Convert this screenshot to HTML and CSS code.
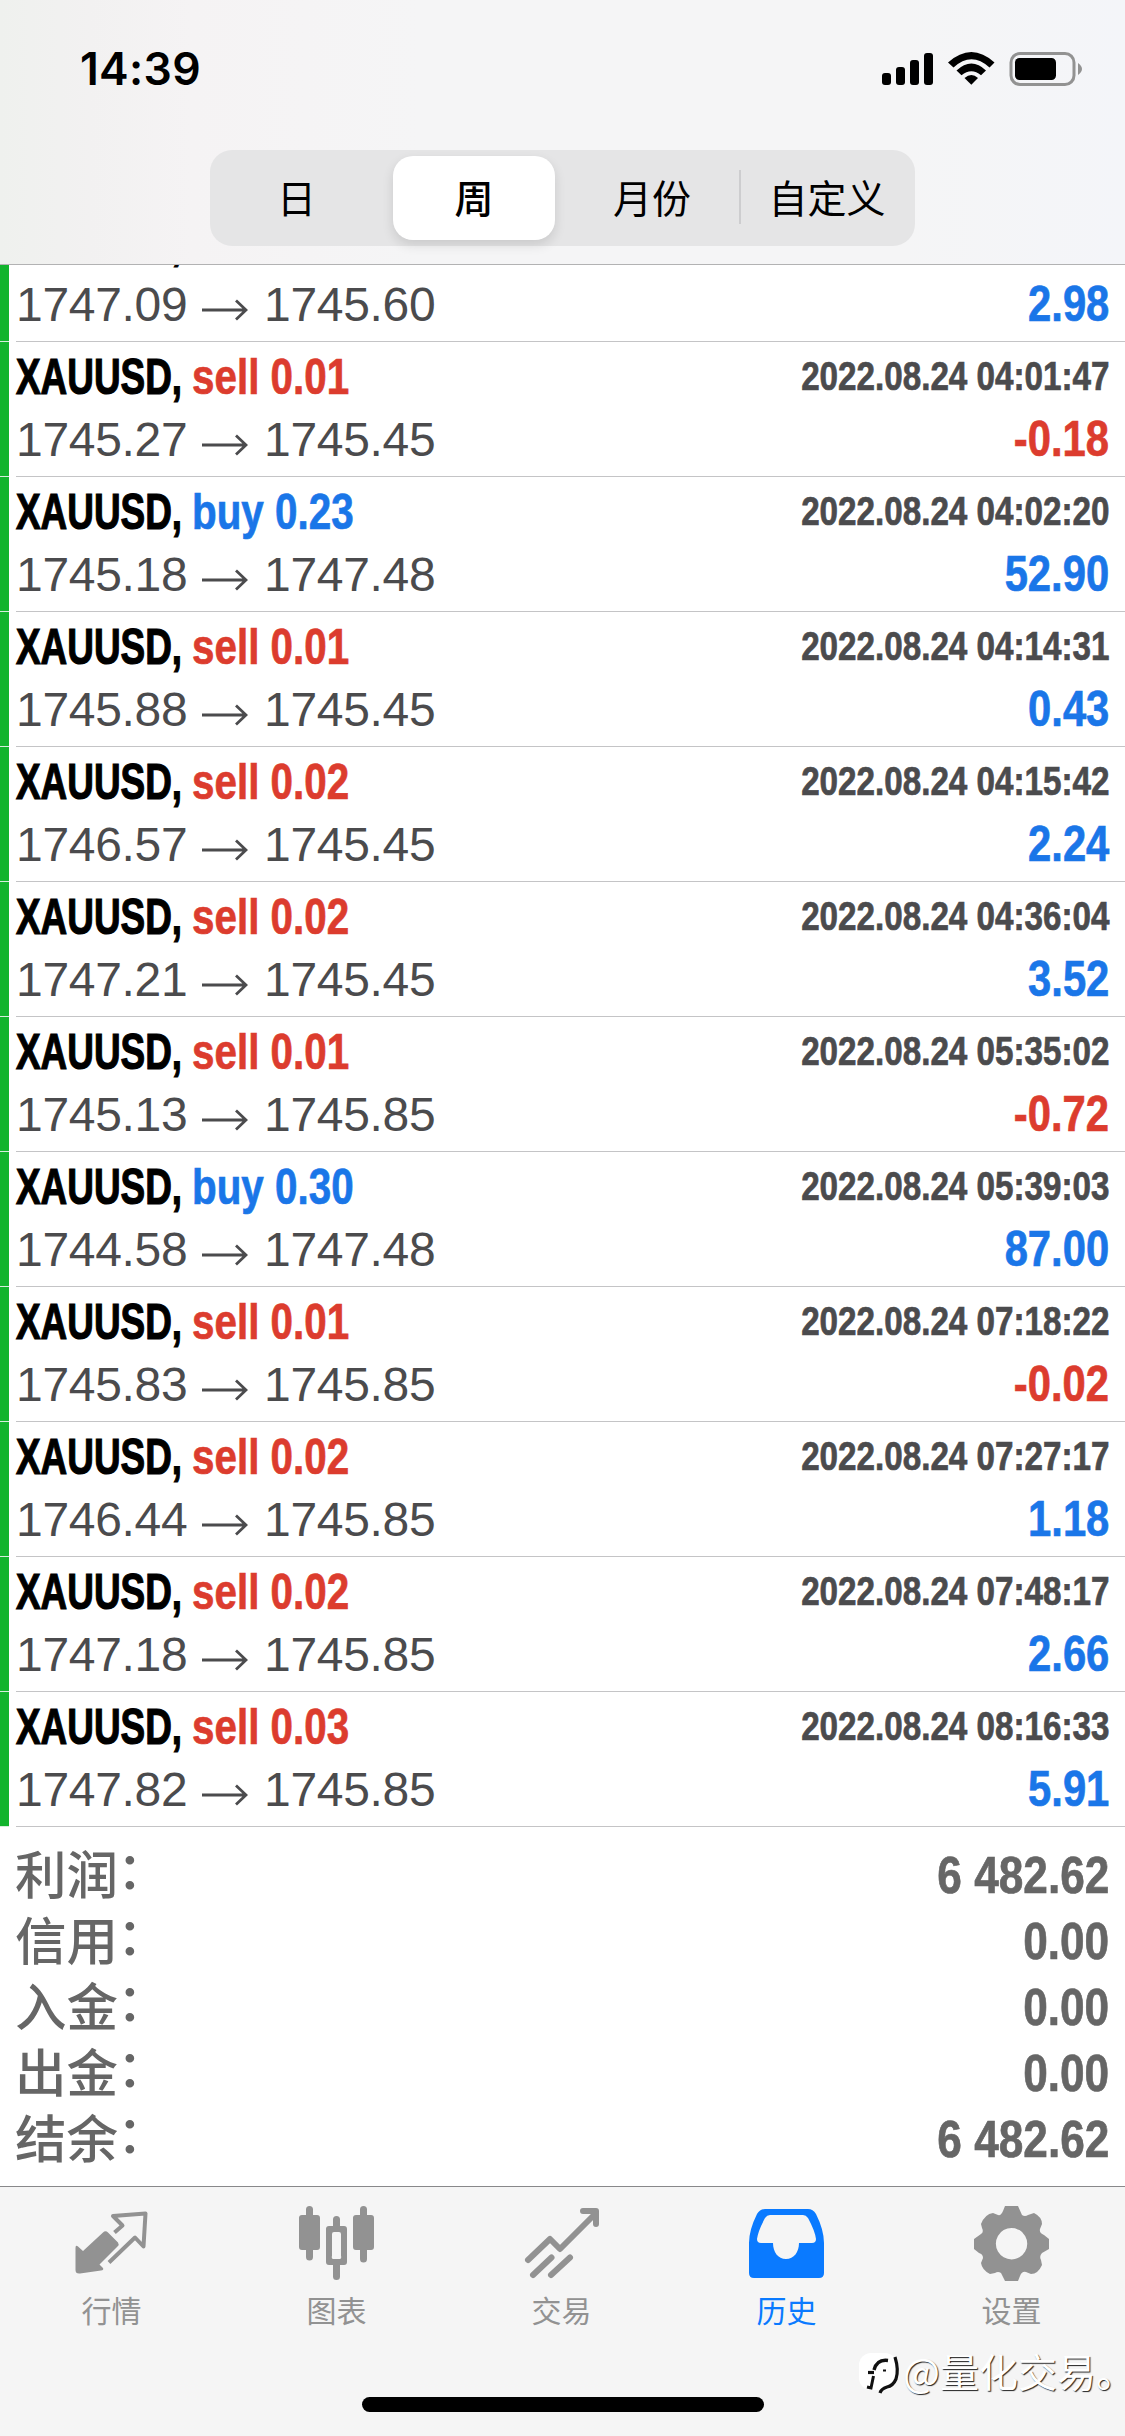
FILE: index.html
```html
<!DOCTYPE html>
<html lang="zh-CN">
<head>
<meta charset="utf-8">
<title>历史</title>
<link rel="stylesheet" href="styles.css">
</head>
<body>
<div class="screen">
<header class="top">
  <div class="status">
    <span class="clock">14:39</span>
    <svg class="status-icons" width="202" height="36" viewBox="0 0 202 36">
      <rect x="0" y="21" width="9" height="12" rx="3"/><rect x="14" y="15" width="9" height="18" rx="3"/><rect x="28" y="8" width="9" height="25" rx="3"/><rect x="42" y="1" width="9" height="32" rx="3"/>
      <path d="M66 10.5Q89.5 -10.5 112.500 10.5L107.500 15.500Q89.500 -1 71.500 15.500Z"/>
      <path d="M74.500 18.500Q89.500 4.500 104 18.500L99 23.300Q89.500 15 79.500 23.300Z"/>
      <path d="M82.500 26Q89.500 20 96 26L89.300 32.800Z"/>
      <rect x="129" y="1.500" width="63" height="31" rx="9" fill="none" stroke="#929292" stroke-width="3"/>
      <rect x="133" y="6" width="41" height="22" rx="4.500"/>
      <path d="M196 11Q204 17 196 23Z" fill="#929292"/>
    </svg>
  </div>
  <div class="segments">
    <span class="seg">日</span><span class="seg on">周</span><span class="seg">月份</span><span class="seg div">自定义</span>
  </div>
</header>
<main class="list">
  <div class="row"><div class="line"><b class="sym">XAUUSD,</b><b class="side sell">sell 0.02</b><b class="date">2022.08.24 03:58:11</b></div><div class="line low"><span class="price">1747.09</span><svg class="arrow" viewBox="0 0 46 22"><path d="M0 11H44M34 1.500L44 11L34 20.500"/></svg><span class="price">1745.60</span><b class="sum gain">2.98</b></div></div>
  <div class="row"><div class="line"><b class="sym">XAUUSD,</b><b class="side sell">sell 0.01</b><b class="date">2022.08.24 04:01:47</b></div><div class="line low"><span class="price">1745.27</span><svg class="arrow" viewBox="0 0 46 22"><path d="M0 11H44M34 1.500L44 11L34 20.500"/></svg><span class="price">1745.45</span><b class="sum loss">-0.18</b></div></div>
  <div class="row"><div class="line"><b class="sym">XAUUSD,</b><b class="side buy">buy 0.23</b><b class="date">2022.08.24 04:02:20</b></div><div class="line low"><span class="price">1745.18</span><svg class="arrow" viewBox="0 0 46 22"><path d="M0 11H44M34 1.500L44 11L34 20.500"/></svg><span class="price">1747.48</span><b class="sum gain">52.90</b></div></div>
  <div class="row"><div class="line"><b class="sym">XAUUSD,</b><b class="side sell">sell 0.01</b><b class="date">2022.08.24 04:14:31</b></div><div class="line low"><span class="price">1745.88</span><svg class="arrow" viewBox="0 0 46 22"><path d="M0 11H44M34 1.500L44 11L34 20.500"/></svg><span class="price">1745.45</span><b class="sum gain">0.43</b></div></div>
  <div class="row"><div class="line"><b class="sym">XAUUSD,</b><b class="side sell">sell 0.02</b><b class="date">2022.08.24 04:15:42</b></div><div class="line low"><span class="price">1746.57</span><svg class="arrow" viewBox="0 0 46 22"><path d="M0 11H44M34 1.500L44 11L34 20.500"/></svg><span class="price">1745.45</span><b class="sum gain">2.24</b></div></div>
  <div class="row"><div class="line"><b class="sym">XAUUSD,</b><b class="side sell">sell 0.02</b><b class="date">2022.08.24 04:36:04</b></div><div class="line low"><span class="price">1747.21</span><svg class="arrow" viewBox="0 0 46 22"><path d="M0 11H44M34 1.500L44 11L34 20.500"/></svg><span class="price">1745.45</span><b class="sum gain">3.52</b></div></div>
  <div class="row"><div class="line"><b class="sym">XAUUSD,</b><b class="side sell">sell 0.01</b><b class="date">2022.08.24 05:35:02</b></div><div class="line low"><span class="price">1745.13</span><svg class="arrow" viewBox="0 0 46 22"><path d="M0 11H44M34 1.500L44 11L34 20.500"/></svg><span class="price">1745.85</span><b class="sum loss">-0.72</b></div></div>
  <div class="row"><div class="line"><b class="sym">XAUUSD,</b><b class="side buy">buy 0.30</b><b class="date">2022.08.24 05:39:03</b></div><div class="line low"><span class="price">1744.58</span><svg class="arrow" viewBox="0 0 46 22"><path d="M0 11H44M34 1.500L44 11L34 20.500"/></svg><span class="price">1747.48</span><b class="sum gain">87.00</b></div></div>
  <div class="row"><div class="line"><b class="sym">XAUUSD,</b><b class="side sell">sell 0.01</b><b class="date">2022.08.24 07:18:22</b></div><div class="line low"><span class="price">1745.83</span><svg class="arrow" viewBox="0 0 46 22"><path d="M0 11H44M34 1.500L44 11L34 20.500"/></svg><span class="price">1745.85</span><b class="sum loss">-0.02</b></div></div>
  <div class="row"><div class="line"><b class="sym">XAUUSD,</b><b class="side sell">sell 0.02</b><b class="date">2022.08.24 07:27:17</b></div><div class="line low"><span class="price">1746.44</span><svg class="arrow" viewBox="0 0 46 22"><path d="M0 11H44M34 1.500L44 11L34 20.500"/></svg><span class="price">1745.85</span><b class="sum gain">1.18</b></div></div>
  <div class="row"><div class="line"><b class="sym">XAUUSD,</b><b class="side sell">sell 0.02</b><b class="date">2022.08.24 07:48:17</b></div><div class="line low"><span class="price">1747.18</span><svg class="arrow" viewBox="0 0 46 22"><path d="M0 11H44M34 1.500L44 11L34 20.500"/></svg><span class="price">1745.85</span><b class="sum gain">2.66</b></div></div>
  <div class="row"><div class="line"><b class="sym">XAUUSD,</b><b class="side sell">sell 0.03</b><b class="date">2022.08.24 08:16:33</b></div><div class="line low"><span class="price">1747.82</span><svg class="arrow" viewBox="0 0 46 22"><path d="M0 11H44M34 1.500L44 11L34 20.500"/></svg><span class="price">1745.85</span><b class="sum gain">5.91</b></div></div>
</main>
<section class="totals">
  <div class="total"><span>利润<i>：</i></span><b class="sum">6 482.62</b></div>
  <div class="total"><span>信用<i>：</i></span><b class="sum">0.00</b></div>
  <div class="total"><span>入金<i>：</i></span><b class="sum">0.00</b></div>
  <div class="total"><span>出金<i>：</i></span><b class="sum">0.00</b></div>
  <div class="total"><span>结余<i>：</i></span><b class="sum">6 482.62</b></div>
</section>
<nav class="tabs">
  <div class="tab">
    <svg width="80" height="80" viewBox="0 0 80 80"><g transform="translate(0 18)"><path d="M3.500 24Q3.500 20.500 6 22.500L11 27L31 8.500Q33.500 6 36 8.500L46 18.500Q47.500 20.500 45.500 22.500L27.500 40.500L31 44Q32 46 29 46.500L8 49.500Q3.500 50 3.500 46Z" fill="currentColor"/><path d="M42.500 8.500L50.500 1.500L41 -8L73.500 -10.500L71.500 22.500L63 13.500L37 38.500" fill="none" stroke="currentColor" stroke-width="4" stroke-linejoin="round"/></g></svg>
    <span>行情</span>
  </div>
  <div class="tab">
    <svg width="80" height="80" viewBox="0 0 80 80"><path fill="currentColor" d="M9 3.500a3.500 3.500 0 0 1 7 0V9h4a3 3 0 0 1 3 3v29a3 3 0 0 1-3 3h-4v7a3.500 3.500 0 0 1-7 0v-7H5a3 3 0 0 1-3-3V12a3 3 0 0 1 3-3h4Z"/><path fill="currentColor" d="M63 3.500a3.500 3.500 0 0 1 7 0V9h4a3 3 0 0 1 3 3v29a3 3 0 0 1-3 3h-4v9a3.500 3.500 0 0 1-7 0v-9h-4a3 3 0 0 1-3-3V12a3 3 0 0 1 3-3h4Z"/><path fill="currentColor" fill-rule="evenodd" d="M36 13.500a3.500 3.500 0 0 1 7 0V20h4a3 3 0 0 1 3 3v33a3 3 0 0 1-3 3h-4v11.500a3.500 3.500 0 0 1-7 0V59h-4a3 3 0 0 1-3-3V23a3 3 0 0 1 3-3h4ZM37 26a2 2 0 0 0-2 2v22a2 2 0 0 0 2 3h5a2 2 0 0 0 2-3V28a2 2 0 0 0-2-2Z"/></svg>
    <span>图表</span>
  </div>
  <div class="tab">
    <svg width="80" height="80" viewBox="0 0 80 80"><path fill="none" stroke="currentColor" stroke-width="6" stroke-linecap="round" stroke-linejoin="round" d="M6 54L28 33L38 43L73 8M61 5H74V18M11 69L29.500 51.500M29 69L48 51.500"/></svg>
    <span>交易</span>
  </div>
  <div class="tab active">
    <svg width="80" height="80" viewBox="0 0 80 80"><path fill="currentColor" fill-rule="evenodd" d="M18 3H61Q66 3 69 8Q77 24 77 37V67Q77 72 72 72H7Q2 72 2 67V37Q2 24 10 8Q13 3 18 3ZM23 9Q20 9 18 12Q11 25 10 33Q10 37 14 37H26C26 46 31 53 39 53S52 46 52 37H65Q69 37 69 33Q68 25 61 12Q59 9 56 9Z"/></svg>
    <span>历史</span>
  </div>
  <div class="tab">
    <svg width="80" height="80" viewBox="0 0 80 80"><path fill="currentColor" fill-rule="evenodd" d="M33 0H46L50 9Q53 11 56 9L62 7Q70 11 70 18L68 23Q67 27 72 29L77 33V43L70 47Q67 50 69 54L70 59Q66 68 59 68L54 66Q50 65 48 70L46 75H33L29 67Q26 65 23 67L18 68Q10 64 9 57L11 52Q11 48 7 47L2 43V33L9 28Q12 26 10 22L9 18Q13 8 21 7L26 9Q29 10 31 5ZM39.500 22a15.700 15.700 0 1 0 .1 0Z"/></svg>
    <span>设置</span>
  </div>
</nav>
<div class="home"></div>
<div class="mark">
  <svg width="44" height="46" viewBox="0 0 44 46"><rect x="0" y="3" width="38" height="37" rx="12" fill="#fff"/><g fill="none" stroke="#111"><path d="M15 20Q18 9 29 10.500" stroke-width="3.400"/><path d="M9 22.500H15" stroke-width="3.200"/><path d="M14.500 26L12 38L8 37" stroke-width="3"/><path d="M36 7Q40 20 37 29Q34 36 28 37Q22 39 21 43" stroke-width="3.200"/></g><rect x="24" y="19.500" width="3" height="2" fill="#111"/></svg>
  <span>@量化交易。</span>
</div>
</div>
</body>
</html>
```
FILE: styles.css
```css
* { box-sizing: border-box; }
body { margin: 0; background: #fff; font-family: "Liberation Sans", "Noto Sans CJK SC", sans-serif; }
.screen { position: relative; width: 1125px; height: 2436px; overflow: hidden; display: flex; flex-direction: column; }
.top { flex: none; height: 265px; border-bottom: 1px solid #b2b2b3; background: linear-gradient(90deg, #eff1ee 0, #f2f1f1 90px, #f5f3f4 190px, #f5f5f6 420px, #f5f5f6 900px, #f4f5f9 1125px); }
.status { height: 150px; padding: 52px 41px 0 80px; display: flex; justify-content: space-between; }
.clock { font: 600 44.500px/34px Inter, sans-serif; letter-spacing: .3px; }
.status-icons { flex: none; }
.segments { width: 705px; height: 96px; margin-left: 210px; padding: 6px 0; border-radius: 22px; background: #e5e5e6; display: grid; grid-template-columns: 183px 162px 184px 1fr; font: 39px/80px "Noto Sans CJK SC", sans-serif; text-align: center; }
.seg { height: 84px; position: relative; }
.seg:first-child { padding-right: 10px; }
.seg:nth-child(3) { padding-left: 10px; }
.seg.on { background: #fff; border-radius: 20px; font-weight: 500; box-shadow: 0 5px 12px rgba(0,0,0,.12); }
.seg.div::before { content: ""; position: absolute; left: 0; top: 14px; width: 2px; height: 54px; background: #cdcdcf; }
.list { flex: none; height: 1562px; overflow: hidden; }
.row { height: 135px; padding: 7px 16px 0 7px; border-left: 9px solid #12b42d; position: relative; }
.row:first-child { margin-top: -58px; }
.row::after { content: ""; position: absolute; left: 7px; right: 0; bottom: 0; height: 1px; background: #c4c4c6; }
.row::before { content: ""; position: absolute; left: -9px; width: 9px; bottom: 0; height: 1px; background: #d5eedb; }
.line { height: 56px; display: flex; align-items: baseline; white-space: pre; }
.low { margin-top: 6px; }
b { font: bold 50px/56px "Liberation Sans", sans-serif; -webkit-text-stroke: .7px currentColor; }
.sym { width: 177px; transform: scaleX(.738); transform-origin: 0 0; -webkit-text-stroke-width: 1.200px; }
.side { transform: translateX(-1px) scaleX(.808); transform-origin: 0 0; }
.date { margin-left: auto; font-size: 40px; color: #4b4b4d; transform: translateY(-4px) scaleX(.83); transform-origin: 100% 0; }
.price { font-size: 48px; line-height: 56px; letter-spacing: -.3px; color: #4b4b4d; width: 186px; }
.arrow { width: 46px; height: 22px; margin: 0 16px 9px 0; fill: none; stroke: #4b4b4d; stroke-width: 2.800; }
.sum { margin-left: auto; transform: scaleX(.835); transform-origin: 100% 0; }
.sell, .loss { color: #dc3c2e; }
.buy, .gain { color: #1a76e8; }
.totals { flex: none; height: 359px; padding: 12px 16px 0 15px; color: #666; }
.total { height: 66px; display: flex; align-items: baseline; font: 500 51.500px/66px "Noto Sans CJK SC", sans-serif; }
.total i { display: inline-block; font-style: normal; transform: translate(-1px, -5px); }
.total .sum { font-size: 52.500px; transform: translateY(-1px) scaleX(.842); }
.tabs { flex: none; height: 250px; border-top: 1px solid #88888a; background: #f5f5f5; display: grid; grid-template-columns: repeat(5, 1fr); padding-top: 19px; color: #929292; }
.tab { display: flex; flex-direction: column; align-items: center; gap: 3px; padding-right: 2px; font: 30px/40px "Noto Sans CJK SC", sans-serif; }
.tab svg { overflow: visible; }
.active { color: #0a7aff; }
.home { position: absolute; left: 362px; top: 2397px; width: 402px; height: 15px; border-radius: 8px; background: #000; }
.mark { position: absolute; left: 859px; top: 2350px; display: flex; font: 39px/40px "Noto Sans CJK SC", sans-serif; color: #fff; text-shadow: 1px 1px 1px #222; white-space: nowrap; }
```
